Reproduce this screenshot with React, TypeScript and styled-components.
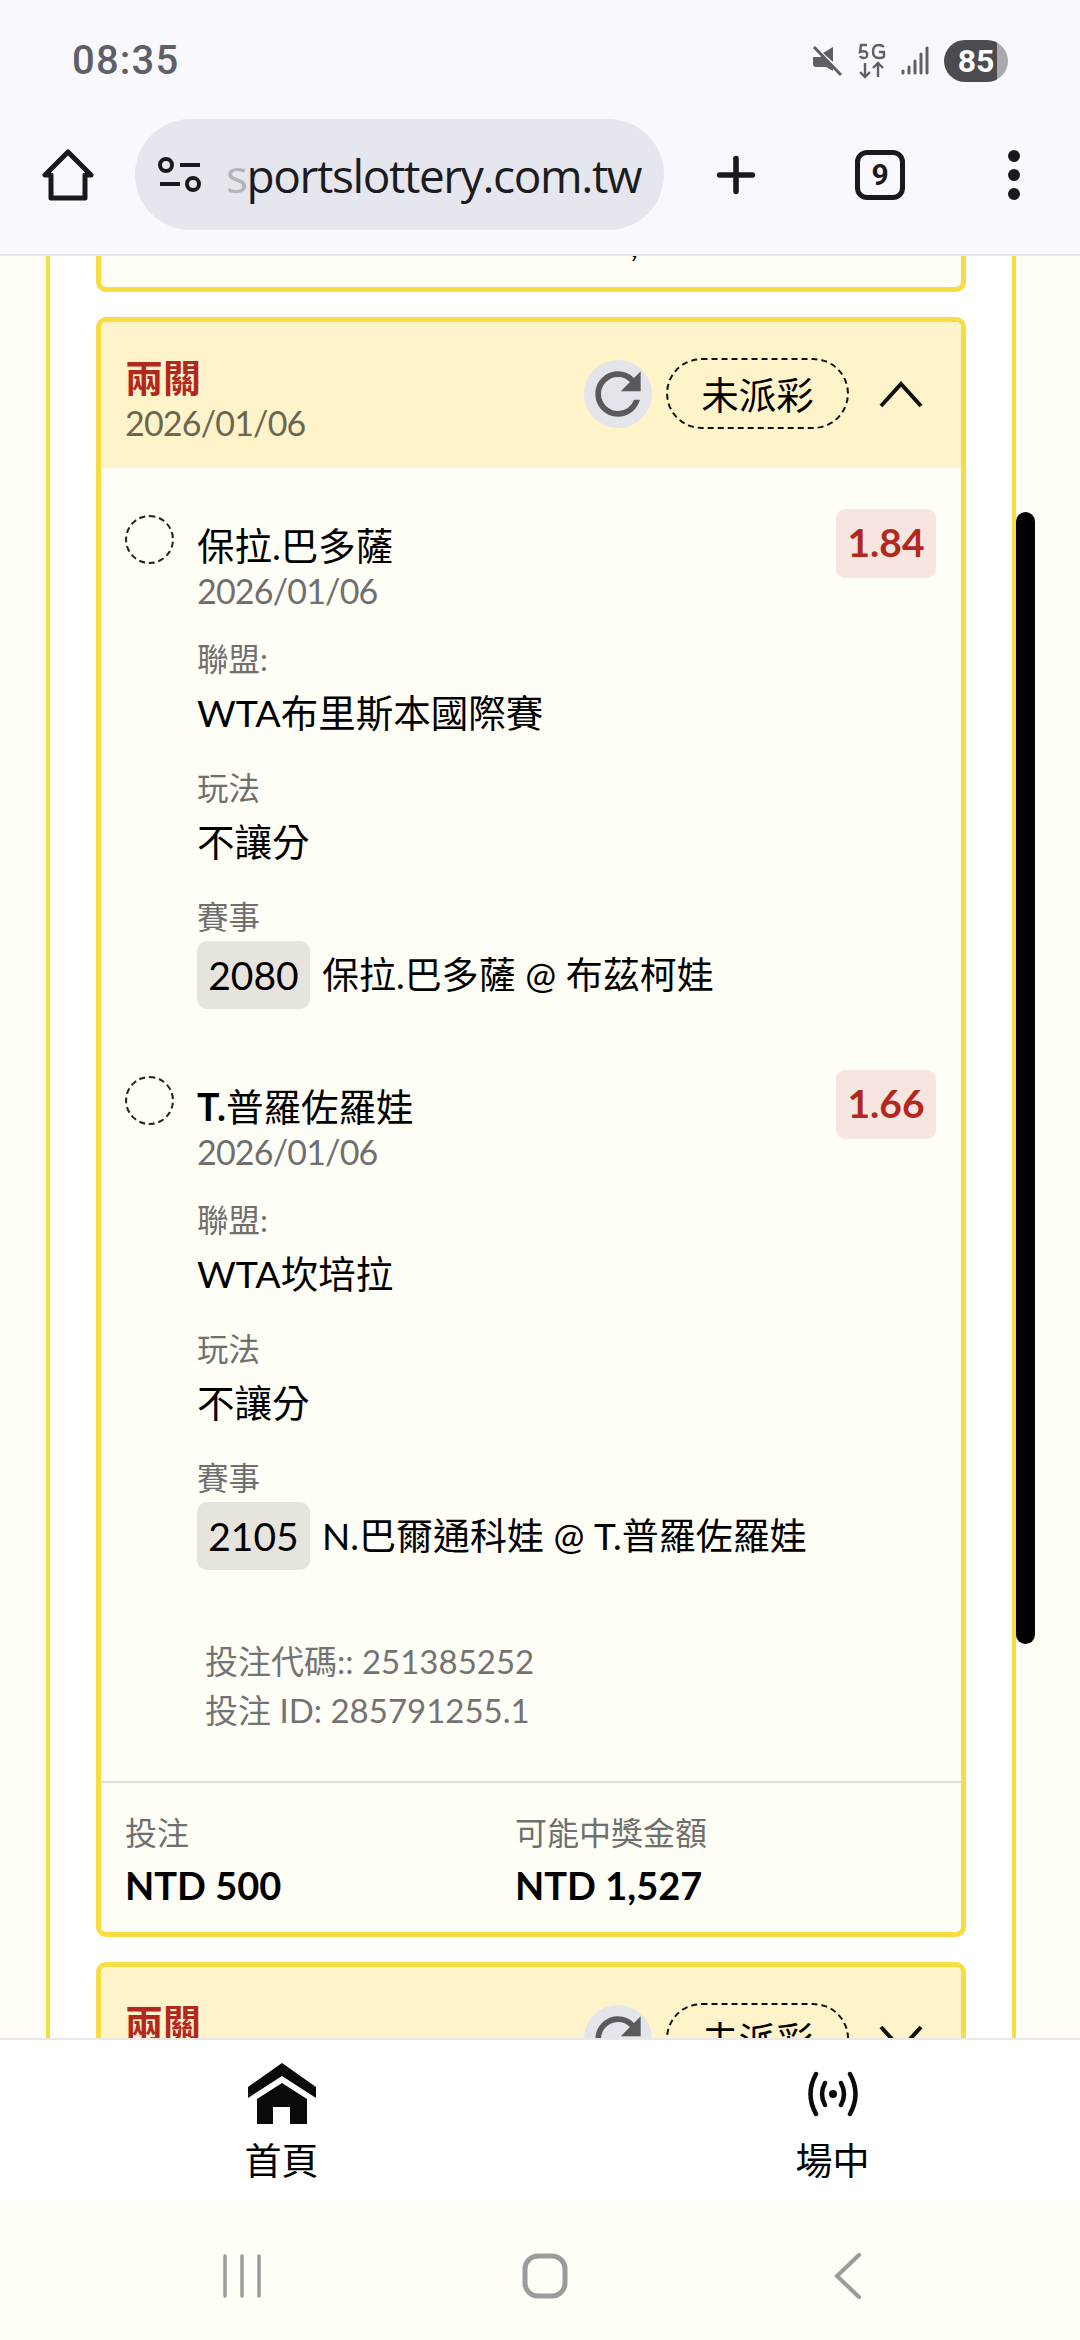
import styled, { createGlobalStyle } from 'styled-components';
import { Plus } from 'lucide-react';
import { MdRefresh } from 'react-icons/md';

const GlobalStyle = createGlobalStyle`
  html, body {
    margin: 0;
    padding: 0;
    background: #fffdf5;
  }
  * {
    box-sizing: border-box;
  }
`;

const FONT = `Lato, "Noto Sans CJK TC", sans-serif`;
const YELLOW = '#f9dc3f';
const RED = '#b2281f';

const Page = styled.div`
  position: relative;
  display: flex;
  flex-direction: column;
  width: 1080px;
  height: 2340px;
  overflow: hidden;
  background: #fffdf5;
  font-family: ${FONT};
  color: #000;
`;

const BrowserChrome = styled.header`
  flex: none;
  height: 256px;
  background: #f8f8fe;
  border-bottom: 2px solid #e4e4e9;
`;

const StatusBar = styled.div`
  display: flex;
  align-items: center;
  justify-content: space-between;
  height: 119px;
  padding: 2px 72px 0 72px;
  color: #5f5f66;
`;

const Clock = styled.span`
  font-family: Roboto, sans-serif;
  font-weight: 500;
  font-size: 40px;
  letter-spacing: 1.2px;
`;

const StatusIcons = styled.div`
  display: flex;
  align-items: center;
  gap: 15px;
`;

const Battery = styled.div`
  width: 64px;
  height: 42px;
  border-radius: 21px;
  background: linear-gradient(90deg, #4b4b50 0 83%, #a9a9ad 83% 100%);
  color: #fff;
  font-family: Roboto, sans-serif;
  font-weight: 700;
  font-size: 32px;
  line-height: 42px;
  text-align: center;
`;

const Toolbar = styled.div`
  display: flex;
  align-items: center;
  height: 111px;
  padding-left: 42px;
`;

const UrlPill = styled.div`
  display: flex;
  align-items: center;
  width: 529px;
  height: 111px;
  margin-left: 41px;
  padding-left: 23px;
  border-radius: 56px;
  background: #e6e6ee;
`;

const UrlText = styled.span`
  margin-left: 24px;
  font-family: "Open Sans", sans-serif;
  font-size: 46px;
  letter-spacing: -1.4px;
  color: #1c1c20;
  white-space: nowrap;
`;

const FadedLetter = styled.span`
  color: #b4b4ba;
`;

const PlusButton = styled.div`
  display: flex;
  margin-left: 44px;
  color: #1a1a1e;
`;

const TabCount = styled.div`
  width: 50px;
  height: 50px;
  margin-left: 91px;
  border: 5px solid #1a1a1e;
  border-radius: 12px;
  font-family: Roboto, sans-serif;
  font-weight: 700;
  font-size: 30px;
  line-height: 40px;
  text-align: center;
  color: #1a1a1e;
`;

const MenuDots = styled.div`
  display: flex;
  flex-direction: column;
  gap: 7px;
  margin-left: 103px;

  i {
    width: 12px;
    height: 12px;
    border-radius: 50%;
    background: #1a1a1e;
  }
`;

const Viewport = styled.main`
  flex: 1;
  min-height: 0;
  overflow: hidden;
`;

const Panel = styled.div`
  width: 970px;
  margin-left: 46px;
  padding: 0 46px 0 46px;
  background: #fff;
  border-left: 4px solid ${YELLOW};
  border-right: 4px solid ${YELLOW};
`;

const PrevCardEnd = styled.div`
  position: relative;
  height: 36px;
  margin-bottom: 25px;
  background: #fffef6;
  border: 5px solid ${YELLOW};
  border-top: none;
  border-radius: 0 0 10px 10px;
`;

const ClippedComma = styled.span`
  position: absolute;
  top: -31px;
  left: 529px;
  font-size: 36px;
  line-height: 36px;
  clip-path: inset(31px 0 0 0);
`;

const Card = styled.section`
  margin-bottom: 25px;
  background: #fffef6;
  border: 5px solid ${YELLOW};
  border-radius: 10px;
  overflow: hidden;
`;

const CardHeader = styled.div`
  display: flex;
  align-items: flex-start;
  justify-content: space-between;
  height: 146px;
  padding: 32px 0 0 24px;
  background: #fff3c9;
`;

const TitleBlock = styled.div`
  display: flex;
  flex-direction: column;
`;

const BetType = styled.div`
  font-size: 38px;
  font-weight: 700;
  line-height: 46px;
  color: ${RED};
`;

const HeaderDate = styled.div`
  font-size: 34px;
  letter-spacing: -0.8px;
  line-height: 45px;
  color: #6b6553;
`;

const HeaderActions = styled.div`
  display: flex;
  align-items: center;
  margin-top: 4px;
  padding-right: 38px;
`;

const RefreshButton = styled.div`
  display: flex;
  align-items: center;
  justify-content: center;
  width: 68px;
  height: 68px;
  border-radius: 50%;
  background: #e3e5ea;
  color: #5a5a5c;
`;

const StatusPill = styled.div`
  width: 183px;
  height: 71px;
  margin-left: 14px;
  border: 2px dashed #111;
  border-radius: 36px;
  font-size: 37.5px;
  line-height: 69px;
  text-align: center;
`;

const Chevron = styled.svg`
  margin-left: 30px;
`;

const CardBody = styled.div`
  padding: 41px 25px 0 24px;
`;

const Leg = styled.article`
  display: flex;
  align-items: flex-start;
  margin-bottom: 61px;
`;

const DashedDot = styled.div`
  flex: none;
  width: 49px;
  height: 49px;
  margin-top: 6px;
  border: 2px dashed #222;
  border-radius: 50%;
`;

const LegMain = styled.div`
  flex: 1;
  padding: 14px 0 0 23px;
`;

const LegName = styled.div`
  font-size: 37.5px;
  line-height: 45px;

  b {
    font-weight: 700;
  }
`;

const LegDate = styled.div`
  margin-bottom: 25px;
  font-size: 34px;
  letter-spacing: -0.8px;
  line-height: 46px;
  color: #6f6f6f;
`;

const Field = styled.div`
  margin-bottom: 32px;

  &:last-child {
    margin-bottom: 0;
  }
`;

const FieldLabel = styled.div`
  margin-bottom: 11px;
  font-size: 31.5px;
  line-height: 40px;
  color: #6f6f6f;
`;

const FieldValue = styled.div`
  font-size: 37.5px;
  line-height: 46px;
`;

const MatchLine = styled.div`
  display: flex;
  align-items: center;
  gap: 12px;
  margin-top: -7px;
  font-size: 37px;
  line-height: 46px;
`;

const MatchCode = styled.span`
  width: 113px;
  height: 68px;
  border-radius: 10px;
  background: #e6e4dd;
  line-height: 68px;
  text-align: center;
  font-size: 39px;
`;

const OddsTag = styled.div`
  flex: none;
  width: 100px;
  height: 69px;
  border-radius: 9px;
  background: #f6e6df;
  color: ${RED};
  font-size: 39px;
  font-weight: 700;
  line-height: 67px;
  text-align: center;
`;

const Codes = styled.div`
  margin-top: 67px;
  padding: 0 0 46px 80px;
  font-size: 33px;
  line-height: 49px;
  color: #737373;
`;

const CardFooter = styled.div`
  display: flex;
  height: 151px;
  padding: 28px 24px 0;
  border-top: 2px solid #dededb;
`;

const FooterCell = styled.div`
  width: 390px;
`;

const FooterLabel = styled.div`
  font-size: 32px;
  line-height: 44px;
  color: #6f6f6f;
`;

const FooterAmount = styled.div`
  margin-top: 5px;
  font-size: 38px;
  font-weight: 700;
  line-height: 50px;
`;

const BottomNav = styled.nav`
  flex: none;
  display: flex;
  height: 167px;
  padding-left: 6px;
  background: #fff;
  border-top: 2px solid #e8e8e8;
`;

const NavItem = styled.div`
  flex: none;
  display: flex;
  flex-direction: column;
  align-items: center;
  width: 551px;
  padding-top: 23px;
  font-size: 37px;
  line-height: 48px;

  svg {
    display: block;
    height: 62px;
    margin-bottom: 12px;
  }
`;

const SystemNav = styled.div`
  flex: none;
  display: grid;
  grid-template-columns: 262px 306px 294px;
  align-items: center;
  height: 135px;
  padding-top: 6px;
  color: #9b9b9b;

  svg {
    display: block;
    justify-self: end;
  }
`;

const Scrollbar = styled.div`
  position: absolute;
  top: 512px;
  left: 1016px;
  width: 19px;
  height: 1132px;
  border-radius: 10px;
  background: #000;
`;

type LegData = {
  name: string;
  boldPrefix?: string;
  odds: string;
  league: string;
  code: string;
  match: string;
};

const legs: LegData[] = [
  { name: '保拉.巴多薩', odds: '1.84', league: 'WTA布里斯本國際賽', code: '2080', match: '保拉.巴多薩 @ 布茲柯娃' },
  { boldPrefix: 'T.', name: '普羅佐羅娃', odds: '1.66', league: 'WTA坎培拉', code: '2105', match: 'N.巴爾通科娃 @ T.普羅佐羅娃' },
];

function CardHead({ chevron }: { chevron: 'up' | 'down' }) {
  return (
    <CardHeader>
      <TitleBlock>
        <BetType>兩關</BetType>
        <HeaderDate>2026/01/06</HeaderDate>
      </TitleBlock>
      <HeaderActions>
        <RefreshButton>
          <MdRefresh size={68} />
        </RefreshButton>
        <StatusPill>未派彩</StatusPill>
        <Chevron width="44" height="28" viewBox="0 0 44 28" fill="none" stroke="#111" strokeWidth="4">
          <path d={chevron === 'up' ? 'M2 26 22 4l20 22' : 'M2 2l20 22L42 2'} />
        </Chevron>
      </HeaderActions>
    </CardHeader>
  );
}

export default function App() {
  return (
    <Page>
      <GlobalStyle />
      <BrowserChrome>
        <StatusBar>
          <Clock>08:35</Clock>
          <StatusIcons>
            <svg width="32" height="32" viewBox="0 0 32 32" fill="#5f5f66">
              <path d="M2 12h7l2-1 11 12v3l-7-4H5q-3 0-3-3z" />
              <path d="M12 8l10-6v15z" />
              <path d="M3 2l27 28" stroke="#5f5f66" strokeWidth="3" />
            </svg>
            <svg width="28" height="36" viewBox="0 0 28 36" fill="none" stroke="#5f5f66" strokeWidth="2.4">
              <path d="M9 2H3L2 9q5-2 7 1 1 5-3 5-3 0-4-2" />
              <path d="M26 4q-2-2-5-2-6 0-6 6.500t6 6.500q5 0 5-2V9h-5" />
              <path d="M7 20v14M2 29l5 5 5-5M20 34V20M15 25l5-5 5 5" />
            </svg>
            <svg width="28" height="30" viewBox="0 0 28 30" fill="none" stroke="#5f5f66" strokeWidth="3" strokeLinecap="round">
              <path d="M2 27v-2M8 27v-6M14 27V15M20 27V8M26 27V2" />
            </svg>
            <Battery>85</Battery>
          </StatusIcons>
        </StatusBar>
        <Toolbar>
          <svg width="52" height="52" viewBox="0 0 52 52" fill="none" stroke="#1a1a1e" strokeWidth="5" strokeLinejoin="round">
            <path d="M26 3 3 26h6v23h34V26h6z" />
          </svg>
          <UrlPill>
            <svg width="44" height="36" viewBox="0 0 44 36" fill="none" stroke="#1a1a1e" strokeWidth="4">
              <circle cx="8" cy="8" r="6" />
              <path d="M22 8h20M2 27h20" />
              <circle cx="35" cy="27" r="6" />
            </svg>
            <UrlText><FadedLetter>s</FadedLetter>portslottery.com.tw</UrlText>
          </UrlPill>
          <PlusButton>
            <Plus size={56} strokeWidth={2.400} />
          </PlusButton>
          <TabCount>9</TabCount>
          <MenuDots><i /><i /><i /></MenuDots>
        </Toolbar>
      </BrowserChrome>

      <Viewport>
        <Panel>
          <PrevCardEnd><ClippedComma>,</ClippedComma></PrevCardEnd>
          <Card>
            <CardHead chevron="up" />
            <CardBody>
              {legs.map((leg) => (
                <Leg key={leg.code}>
                  <DashedDot />
                  <LegMain>
                    <LegName>{leg.boldPrefix && <b>{leg.boldPrefix}</b>}{leg.name}</LegName>
                    <LegDate>2026/01/06</LegDate>
                    <Field>
                      <FieldLabel>聯盟:</FieldLabel>
                      <FieldValue>{leg.league}</FieldValue>
                    </Field>
                    <Field>
                      <FieldLabel>玩法</FieldLabel>
                      <FieldValue>不讓分</FieldValue>
                    </Field>
                    <Field>
                      <FieldLabel>賽事</FieldLabel>
                      <MatchLine>
                        <MatchCode>{leg.code}</MatchCode>
                        <span>{leg.match}</span>
                      </MatchLine>
                    </Field>
                  </LegMain>
                  <OddsTag>{leg.odds}</OddsTag>
                </Leg>
              ))}
              <Codes>
                <div>投注代碼:: 251385252</div>
                <div>投注 ID: 285791255.1</div>
              </Codes>
            </CardBody>
            <CardFooter>
              <FooterCell>
                <FooterLabel>投注</FooterLabel>
                <FooterAmount>NTD 500</FooterAmount>
              </FooterCell>
              <FooterCell>
                <FooterLabel>可能中獎金額</FooterLabel>
                <FooterAmount>NTD 1,527</FooterAmount>
              </FooterCell>
            </CardFooter>
          </Card>
          <Card>
            <CardHead chevron="down" />
          </Card>
        </Panel>
      </Viewport>

      <BottomNav>
        <NavItem>
          <svg width="68" height="62" viewBox="0 0 68 62" fill="#0a0a0a">
            <path d="M34 0 68 24v11L34 13 0 35V24z" />
            <path d="M34 20 59 36v25H42V44H25v17H9V36z" />
          </svg>
          首頁
        </NavItem>
        <NavItem>
          <svg width="52" height="62" viewBox="0 0 52 62" fill="none" stroke="#0a0a0a" strokeWidth="4.500" strokeLinecap="round">
            <path d="M9 11q-11 20 0 40M43 11q11 20 0 40M18 20q-6 11 0 22M34 20q6 11 0 22" />
            <circle cx="26" cy="31" r="4" fill="#0a0a0a" stroke="none" />
          </svg>
          場中
        </NavItem>
      </BottomNav>

      <SystemNav>
        <svg width="40" height="44" viewBox="0 0 40 44" stroke="currentColor" strokeWidth="3.500" strokeLinecap="round">
          <path d="M3 2v40M20 2v40M37 2v40" />
        </svg>
        <svg width="46" height="46" viewBox="0 0 46 46" fill="none" stroke="currentColor" strokeWidth="5">
          <rect x="3" y="3" width="40" height="40" rx="13" />
        </svg>
        <svg width="30" height="46" viewBox="0 0 30 46" fill="none" stroke="currentColor" strokeWidth="4" strokeLinecap="round">
          <path d="M27 2 5 23l22 21" />
        </svg>
      </SystemNav>

      <Scrollbar />
    </Page>
  );
}
